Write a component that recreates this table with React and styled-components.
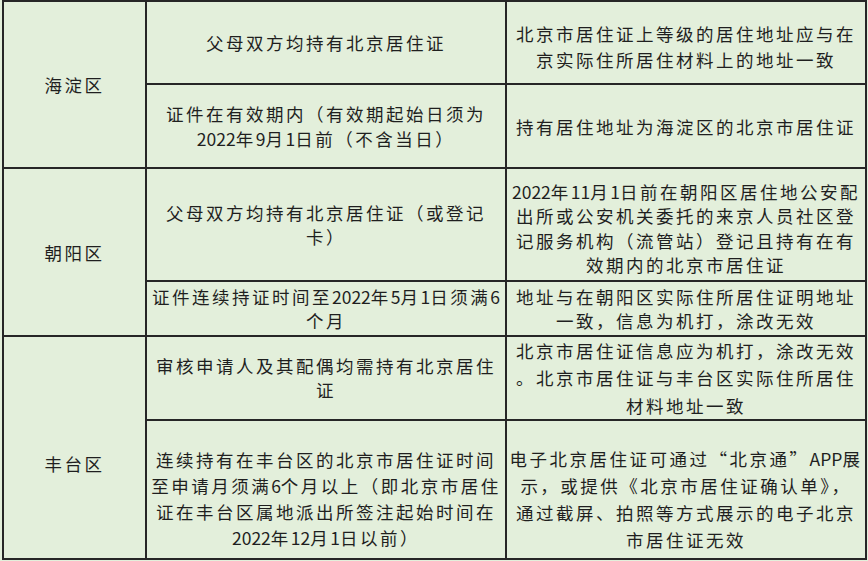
import React from "react";
import styled, { createGlobalStyle } from "styled-components";

const GlobalStyle = createGlobalStyle`
  html, body {
    margin: 0;
    padding: 0;
    background: #e3efdb;
  }
  body {
    font-family: "Noto Sans CJK SC", "Noto Sans", sans-serif;
    color: #1f1f1f;
  }
`;

const Page = styled.div`
  padding: 0 0 0 2px;
`;

const Table = styled.div`
  display: grid;
  grid-template-columns: 141px 358px 358px;
  grid-template-rows: 81px 82px 111px 53px 82px 137px;
  gap: 2px;
  padding: 2px;
  width: max-content;
  background: #262626;
`;

const Cell = styled.div`
  display: flex;
  flex-direction: column;
  align-items: center;
  justify-content: center;
  background: #e3efdb;
  font-size: 17.5px;
  letter-spacing: 2.5px;
  line-height: ${(p) => p.$lh || 25}px;
  padding-top: ${(p) => p.$shift || 0}px;
  box-sizing: border-box;
  grid-row: ${(p) => (p.$span ? `span ${p.$span}` : "auto")};
`;

const Line = styled.div`
  white-space: nowrap;
  text-align: center;
`;

const Num = styled.span`
  letter-spacing: 0;
`;

function withNums(text) {
  return text.split(/([0-9A-Za-z]+)/).map((part, i) =>
    /^[0-9A-Za-z]+$/.test(part) ? <Num key={i}>{part}</Num> : part
  );
}

const groups = [
  {
    district: "海淀区",
    rows: [
      {
        left: ["父母双方均持有北京居住证"],
        right: ["北京市居住证上等级的居住地址应与在", "京实际住所居住材料上的地址一致"],
        rightLh: 26,
        rightShift: 8,
      },
      {
        left: ["证件在有效期内（有效期起始日须为", "2022年9月1日前（不含当日）"],
        right: ["持有居住地址为海淀区的北京市居住证"],
      },
    ],
  },
  {
    district: "朝阳区",
    rows: [
      {
        left: ["父母双方均持有北京居住证（或登记", "卡）"],
        leftLh: 24,
        right: [
          "2022年11月1日前在朝阳区居住地公安配",
          "出所或公安机关委托的来京人员社区登",
          "记服务机构（流管站）登记且持有在有",
          "效期内的北京市居住证",
        ],
        rightLh: 24.5,
        rightShift: 8,
      },
      {
        left: ["证件连续持证时间至2022年5月1日须满6", "个月"],
        leftLh: 24,
        right: ["地址与在朝阳区实际住所居住证明地址", "一致，信息为机打，涂改无效"],
        rightLh: 24,
      },
    ],
  },
  {
    district: "丰台区",
    districtShift: 32,
    rows: [
      {
        left: ["审核申请人及其配偶均需持有北京居住", "证"],
        leftLh: 24,
        right: [
          "北京市居住证信息应为机打，涂改无效",
          "。北京市居住证与丰台区实际住所居住",
          "材料地址一致",
        ],
        rightLh: 27.5,
      },
      {
        left: [
          "连续持有在丰台区的北京市居住证时间",
          "至申请月须满6个月以上（即北京市居住",
          "证在丰台区属地派出所签注起始时间在",
          "2022年12月1日以前）",
        ],
        leftLh: 26,
        leftShift: 18,
        right: [
          "电子北京居住证可通过“北京通”APP展",
          "示，或提供《北京市居住证确认单》，",
          "通过截屏、拍照等方式展示的电子北京",
          "市居住证无效",
        ],
        rightLh: 27,
        rightShift: 18,
      },
    ],
  },
];

function Lines({ lines }) {
  return lines.map((l, i) => <Line key={i}>{withNums(l)}</Line>);
}

export default function App() {
  return (
    <>
      <GlobalStyle />
      <Page>
        <Table>
          {groups.map((g) => (
            <React.Fragment key={g.district}>
              <Cell $span={g.rows.length} $shift={g.districtShift}>
                {g.district}
              </Cell>
              {g.rows.map((r, i) => (
                <React.Fragment key={i}>
                  <Cell $lh={r.leftLh} $shift={r.leftShift}>
                    <Lines lines={r.left} />
                  </Cell>
                  <Cell $lh={r.rightLh} $shift={r.rightShift}>
                    <Lines lines={r.right} />
                  </Cell>
                </React.Fragment>
              ))}
            </React.Fragment>
          ))}
        </Table>
      </Page>
    </>
  );
}
